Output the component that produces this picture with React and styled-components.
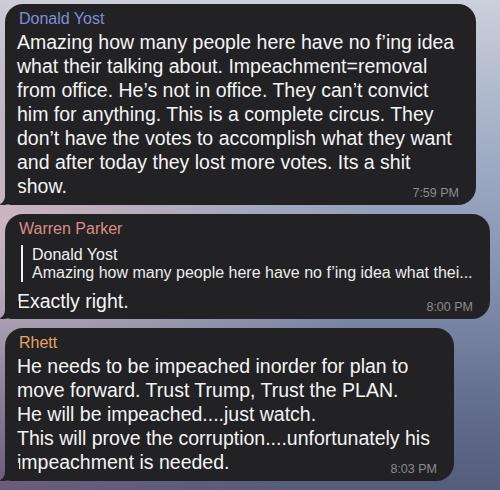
import React from "react";
import styled, { createGlobalStyle } from "styled-components";

const Global = createGlobalStyle`
  html, body { margin: 0; padding: 0; }
  body { width: 500px; height: 490px; overflow: hidden; }
  #root { width: 500px; height: 490px; }
`;

const Screen = styled.div`
  width: 500px;
  height: 490px;
  box-sizing: border-box;
  padding: 4px 10px 0 5px;
  display: flex;
  flex-direction: column;
  gap: 9px;
  font-family: "Liberation Sans", Arial, sans-serif;
  background:
    radial-gradient(ellipse 75% 55% at 0% 45%, rgba(218, 186, 192, 0.8) 0%, rgba(218, 186, 192, 0) 100%),
    radial-gradient(ellipse 60% 40% at 0% 100%, rgba(120, 90, 120, 0.6) 0%, rgba(120, 90, 120, 0) 100%),
    linear-gradient(180deg, #cbd0da 0%, #a8b3c9 25%, #8594b2 55%, #66718f 80%, #545d7b 100%);
`;

const Bubble = styled.div`
  position: relative;
  width: ${(p) => p.$w}px;
  box-sizing: border-box;
  background: #222224;
  border-radius: 18px 18px 18px 6px;
  padding: 6px 16px 5px 12px;
  display: flex;
  flex-direction: column;
`;

const Tail = styled.svg`
  position: absolute;
  left: -6px;
  bottom: 0;
  width: 20px;
  height: 18px;
  display: block;
`;

const Name = styled.div`
  font-size: 16px;
  line-height: 18px;
  color: ${(p) => p.$color};
  padding-left: 2px;
`;

const Text = styled.div`
  font-size: 19.5px;
  line-height: 24px;
  color: #f4f4f4;
  white-space: pre-line;
  margin-top: ${(p) => p.$mt ?? 2}px;
`;

const Time = styled.div`
  align-self: flex-end;
  font-size: 12.5px;
  line-height: 14px;
  color: #8b8b90;
  margin-top: ${(p) => p.$mt}px;
  margin-right: 1px;
`;

const Reply = styled.div`
  margin-top: 7px;
  margin-left: 4px;
  padding-left: 9px;
  border-left: 2.5px solid #f2f2f2;
  display: flex;
  flex-direction: column;
`;

const ReplyName = styled.div`
  font-size: 16px;
  line-height: 19px;
  color: #f2f2f2;
`;

const ReplyText = styled.div`
  font-size: 16px;
  line-height: 18px;
  color: #ececec;
  white-space: nowrap;
`;

const BubbleTail = () => (
  <Tail viewBox="0 0 20 18">
    <path
      d="M6 0 L6 9 C6 13 4 16 0 17.6 C1.5 18 3 18 5 18 C8 18 10.5 17 12.5 15.3 C14 17 16.5 18 20 18 L20 0 Z"
      fill="#222224"
    />
  </Tail>
);

export default function App() {
  return (
    <>
      <Global />
      <Screen>
        <Bubble $w={471}>
          <Name $color="#7d8fdb">Donald Yost</Name>
          <Text>
            {"Amazing how many people here have no f\u2019ing idea\nwhat their talking about. Impeachment=removal\nfrom office. He\u2019s not in office. They can\u2019t convict\nhim for anything. This is a complete circus. They\ndon\u2019t have the votes to accomplish what they want\nand after today they lost more votes. Its a shit\nshow."}
          </Text>
          <Time $mt={-12}>7:59 PM</Time>
          <BubbleTail />
        </Bubble>
        <Bubble $w={485}>
          <Name $color="#de8c83">Warren Parker</Name>
          <Reply>
            <ReplyName>Donald Yost</ReplyName>
            <ReplyText>Amazing how many people here have no f’ing idea what thei...</ReplyText>
          </Reply>
          <Text $mt={7}>Exactly right.</Text>
          <Time $mt={-13}>8:00 PM</Time>
          <BubbleTail />
        </Bubble>
        <Bubble $w={449}>
          <Name $color="#e6a264">Rhett</Name>
          <Text>
            {"He needs to be impeached inorder for plan to\nmove forward. Trust Trump, Trust the PLAN.\nHe will be impeached....just watch.\nThis will prove the corruption....unfortunately his\nimpeachment is needed."}
          </Text>
          <Time $mt={-12}>8:03 PM</Time>
          <BubbleTail />
        </Bubble>
      </Screen>
    </>
  );
}
